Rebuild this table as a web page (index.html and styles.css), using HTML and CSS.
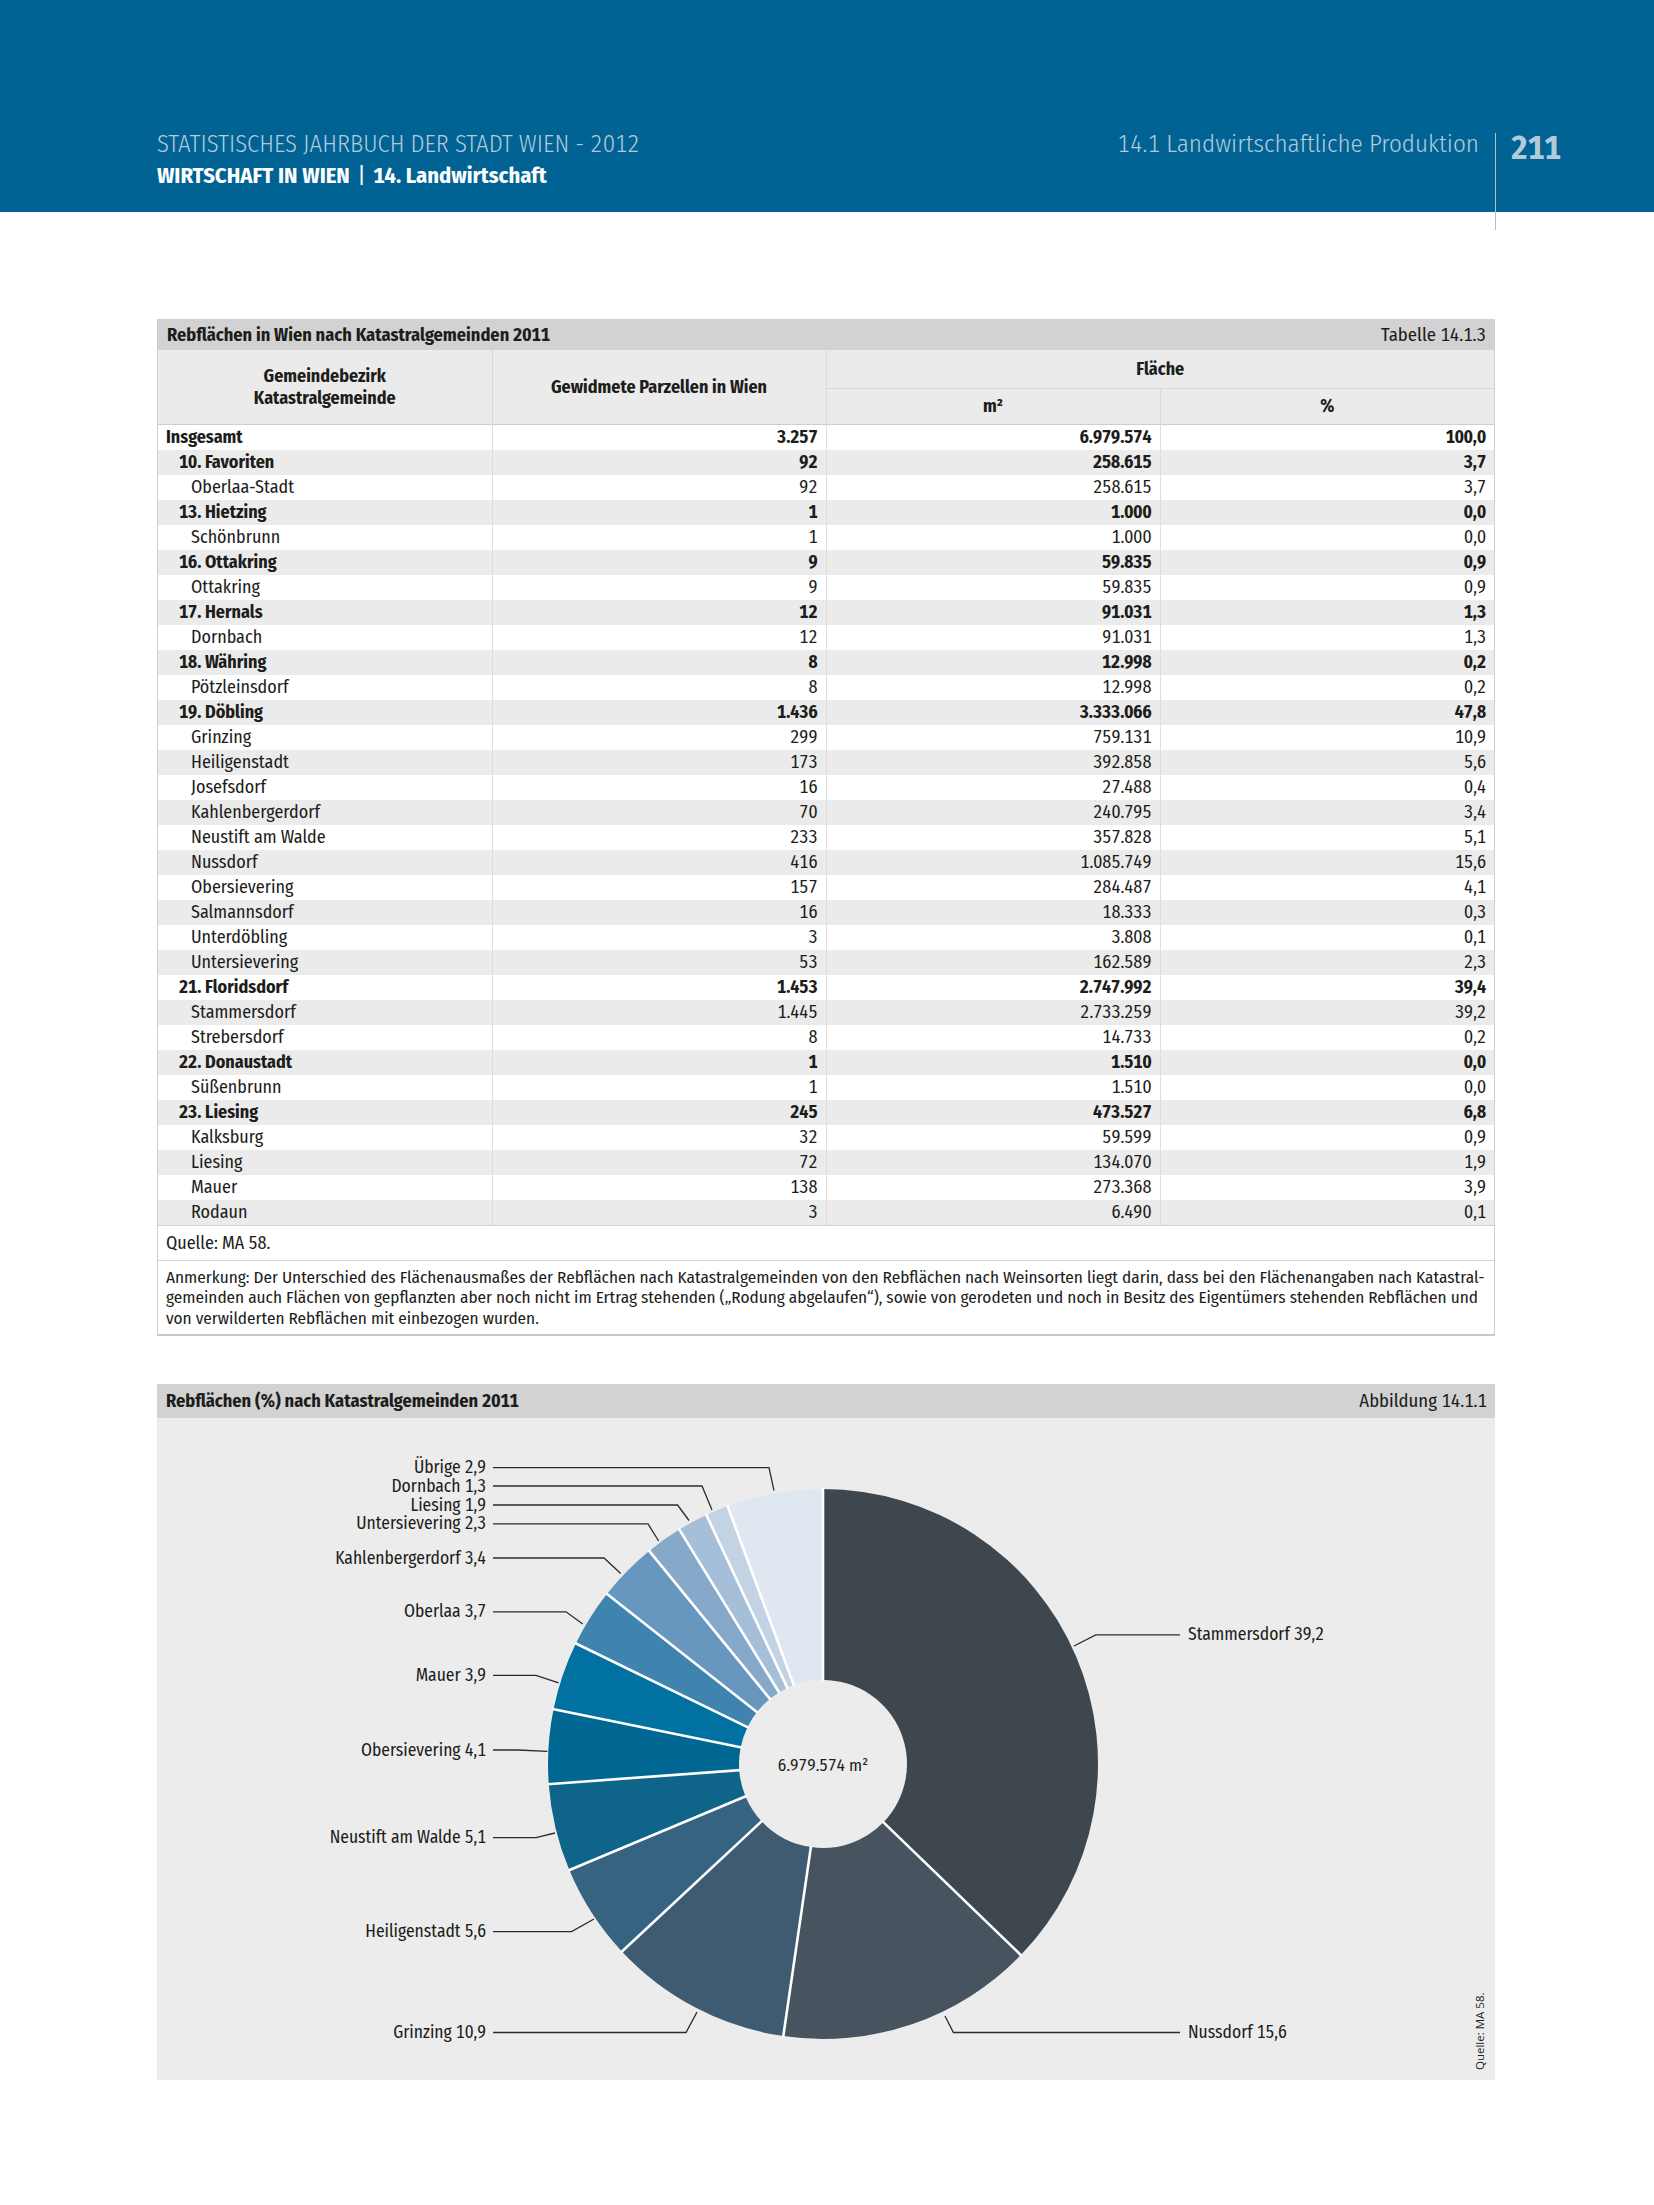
FILE: index.html
```html
<!DOCTYPE html>
<html lang="de">
<head>
<meta charset="utf-8">
<title>Statistisches Jahrbuch der Stadt Wien 2012 – 14.1 Landwirtschaftliche Produktion</title>
<link rel="stylesheet" href="styles.css">
</head>
<body>
<header class="masthead">
  <div class="mast-inner">
    <div class="mast-left">
      <div class="mast-title">STATISTISCHES JAHRBUCH DER STADT WIEN - 2012</div>
      <div class="mast-sub">WIRTSCHAFT IN WIEN <span class="bar">|</span> 14. Landwirtschaft</div>
    </div>
    <div class="mast-section">14.1 Landwirtschaftliche Produktion</div>
  </div>
  <div class="mast-page">211</div>
</header>

<main class="content">
  <section class="tbox">
    <div class="tbar">
      <span class="tbar-title">Rebflächen in Wien nach Katastralgemeinden 2011</span>
      <span class="tbar-ref">Tabelle 14.1.3</span>
    </div>
    <table class="data">
      <colgroup><col class="c1"><col class="c2"><col class="c3"><col class="c4"></colgroup>
      <thead>
        <tr class="h1">
          <th rowspan="2">Gemeindebezirk<br>Katastralgemeinde</th>
          <th rowspan="2">Gewidmete Parzellen in Wien</th>
          <th colspan="2">Fläche</th>
        </tr>
        <tr class="h2">
          <th>m²</th>
          <th>%</th>
        </tr>
      </thead>
      <tbody>
        <tr class="b"><td class="l0">Insgesamt</td><td>3.257</td><td>6.979.574</td><td>100,0</td></tr>
        <tr class="b"><td class="l1">10. Favoriten</td><td>92</td><td>258.615</td><td>3,7</td></tr>
        <tr><td class="l2">Oberlaa-Stadt</td><td>92</td><td>258.615</td><td>3,7</td></tr>
        <tr class="b"><td class="l1">13. Hietzing</td><td>1</td><td>1.000</td><td>0,0</td></tr>
        <tr><td class="l2">Schönbrunn</td><td>1</td><td>1.000</td><td>0,0</td></tr>
        <tr class="b"><td class="l1">16. Ottakring</td><td>9</td><td>59.835</td><td>0,9</td></tr>
        <tr><td class="l2">Ottakring</td><td>9</td><td>59.835</td><td>0,9</td></tr>
        <tr class="b"><td class="l1">17. Hernals</td><td>12</td><td>91.031</td><td>1,3</td></tr>
        <tr><td class="l2">Dornbach</td><td>12</td><td>91.031</td><td>1,3</td></tr>
        <tr class="b"><td class="l1">18. Währing</td><td>8</td><td>12.998</td><td>0,2</td></tr>
        <tr><td class="l2">Pötzleinsdorf</td><td>8</td><td>12.998</td><td>0,2</td></tr>
        <tr class="b"><td class="l1">19. Döbling</td><td>1.436</td><td>3.333.066</td><td>47,8</td></tr>
        <tr><td class="l2">Grinzing</td><td>299</td><td>759.131</td><td>10,9</td></tr>
        <tr><td class="l2">Heiligenstadt</td><td>173</td><td>392.858</td><td>5,6</td></tr>
        <tr><td class="l2">Josefsdorf</td><td>16</td><td>27.488</td><td>0,4</td></tr>
        <tr><td class="l2">Kahlenbergerdorf</td><td>70</td><td>240.795</td><td>3,4</td></tr>
        <tr><td class="l2">Neustift am Walde</td><td>233</td><td>357.828</td><td>5,1</td></tr>
        <tr><td class="l2">Nussdorf</td><td>416</td><td>1.085.749</td><td>15,6</td></tr>
        <tr><td class="l2">Obersievering</td><td>157</td><td>284.487</td><td>4,1</td></tr>
        <tr><td class="l2">Salmannsdorf</td><td>16</td><td>18.333</td><td>0,3</td></tr>
        <tr><td class="l2">Unterdöbling</td><td>3</td><td>3.808</td><td>0,1</td></tr>
        <tr><td class="l2">Untersievering</td><td>53</td><td>162.589</td><td>2,3</td></tr>
        <tr class="b"><td class="l1">21. Floridsdorf</td><td>1.453</td><td>2.747.992</td><td>39,4</td></tr>
        <tr><td class="l2">Stammersdorf</td><td>1.445</td><td>2.733.259</td><td>39,2</td></tr>
        <tr><td class="l2">Strebersdorf</td><td>8</td><td>14.733</td><td>0,2</td></tr>
        <tr class="b"><td class="l1">22. Donaustadt</td><td>1</td><td>1.510</td><td>0,0</td></tr>
        <tr><td class="l2">Süßenbrunn</td><td>1</td><td>1.510</td><td>0,0</td></tr>
        <tr class="b"><td class="l1">23. Liesing</td><td>245</td><td>473.527</td><td>6,8</td></tr>
        <tr><td class="l2">Kalksburg</td><td>32</td><td>59.599</td><td>0,9</td></tr>
        <tr><td class="l2">Liesing</td><td>72</td><td>134.070</td><td>1,9</td></tr>
        <tr><td class="l2">Mauer</td><td>138</td><td>273.368</td><td>3,9</td></tr>
        <tr><td class="l2">Rodaun</td><td>3</td><td>6.490</td><td>0,1</td></tr>
      </tbody>
    </table>
    <div class="quelle">Quelle: MA 58.</div>
    <p class="anm">Anmerkung: Der Unterschied des Flächenausmaßes der Rebflächen nach Katastralgemeinden von den Rebflächen nach Weinsorten liegt darin, dass bei den Flächenangaben nach Katastral-<br>gemeinden auch Flächen von gepflanzten aber noch nicht im Ertrag stehenden („Rodung abgelaufen“), sowie von gerodeten und noch in Besitz des Eigentümers stehenden Rebflächen und<br>von verwilderten Rebflächen mit einbezogen wurden.</p>
  </section>

  <section class="cbox">
    <div class="cbar">
      <span class="tbar-title">Rebflächen (%) nach Katastralgemeinden 2011</span>
      <span class="tbar-ref">Abbildung 14.1.1</span>
    </div>
    <div class="cbody">
      <svg class="chart" width="1338" height="662" viewBox="0 0 1338 662">
        <g id="slices"></g>
        <g class="leaders">
          <polyline points="336,49.6 612,49.6 617,72.6"/>
          <polyline points="336,68 545,68 555,92"/>
          <polyline points="336,87 520.6,87 532,102.5"/>
          <polyline points="336,105.8 491,105.8 501.6,123"/>
          <polyline points="336,140 447,140 463.7,155.5"/>
          <polyline points="336,193.8 409,193.8 425.8,206"/>
          <polyline points="336,257.4 379,257.4 401.6,264.8"/>
          <polyline points="336,332 361,332 390.4,333.4"/>
          <polyline points="336,419.6 379,419.6 398,415"/>
          <polyline points="336,513.6 414.6,513.6 437,501"/>
          <polyline points="336,614.5 529,614.5 540,594"/>
          <polyline points="1023,216.8 938.7,216.8 917,228"/>
          <polyline points="1023,614.5 796.4,614.5 788,598"/>
        </g>
        <g class="lbl-left">
          <text x="329" y="49.6">Übrige 2,9</text>
          <text x="329" y="68">Dornbach 1,3</text>
          <text x="329" y="87">Liesing 1,9</text>
          <text x="329" y="105.8">Untersievering 2,3</text>
          <text x="329" y="140">Kahlenbergerdorf 3,4</text>
          <text x="329" y="193.8">Oberlaa 3,7</text>
          <text x="329" y="257.4">Mauer 3,9</text>
          <text x="329" y="332">Obersievering 4,1</text>
          <text x="329" y="419.6">Neustift am Walde 5,1</text>
          <text x="329" y="513.6">Heiligenstadt 5,6</text>
          <text x="329" y="614.5">Grinzing 10,9</text>
        </g>
        <g class="lbl-right">
          <text x="1031" y="216.8">Stammersdorf 39,2</text>
          <text x="1031" y="614.5">Nussdorf 15,6</text>
        </g>
        <text class="center-lbl" x="666" y="347">6.979.574 m²</text>
        <text class="src" x="0" y="0" transform="translate(1327 652) rotate(-90)">Quelle: MA 58.</text>
      </svg>
    </div>
  </section>
</main>
<script src="script.js"></script>
</body>
</html>
```
FILE: styles.css
```css
* { box-sizing: border-box; }

body {
  margin: 0;
  background: #ffffff;
  color: #1d1d1b;
  font-family: "Fira Sans Condensed", "Roboto Condensed", "Liberation Sans", sans-serif;
  font-variant-numeric: tabular-nums;
}

/* ---------- masthead ---------- */
.masthead {
  height: 212px;
  background: #006394;
  display: grid;
  grid-template-columns: 1338px auto;
  align-items: start;
  padding: 130px 0 0 157px;
}
.mast-inner {
  display: flex;
  justify-content: space-between;
  align-items: flex-start;
  padding-right: 16px;
}
.mast-title {
  font-size: 24.5px;
  font-weight: 300;
  line-height: 28px;
  color: #b3cadb;
}
.mast-sub {
  margin-top: 4px;
  font-size: 22.5px;
  font-weight: 700;
  line-height: 28px;
  color: #ffffff;
}
.mast-sub .bar {
  font-weight: 400;
  margin: 0 3px;
}
.mast-section {
  font-size: 25px;
  font-weight: 300;
  line-height: 28px;
  color: #b3cadb;
}
.mast-page {
  height: 97px;
  margin-top: 3px;
  padding-left: 15px;
  border-left: 1px solid #a9c1d3;
  font-size: 33px;
  font-weight: 700;
  line-height: 30px;
  color: #b3cadb;
}

/* ---------- content ---------- */
.content {
  padding: 107px 0 0 157px;
}

.tbox {
  width: 1338px;
  border: 1px solid #cfcfcf;
  border-top: 0;
  border-bottom: 2px solid #c9c9c9;
}
.tbar, .cbar {
  display: flex;
  justify-content: space-between;
  align-items: center;
  padding: 0 8px 0 9px;
  background: #d1d2d1;
  font-size: 18.7px;
}
.tbar { height: 31px; }
.tbar-title { font-weight: 700; font-size: 18.3px; }

table.data {
  width: 100%;
  border-collapse: collapse;
  table-layout: fixed;
  font-size: 18px;
}
.data th {
  background: #ebebeb;
  font-weight: 700;
  text-align: center;
  line-height: 22px;
  padding: 0;
  border-left: 1px solid #d9d9d9;
}
.data th:first-child { border-left: 0; }
.data .h1 th[colspan] { border-bottom: 1px solid #d9d9d9; }
.data .h1 { height: 38px; }
.data .h2 { height: 36px; }
.data thead { border-bottom: 1px solid #cfcfcf; }
.data .h2 th:first-child { border-left: 1px solid #d9d9d9; }

.data td {
  height: 25px;
  padding: 0 8px;
  line-height: 25px;
  text-align: right;
  border-left: 1px solid #dedede;
  white-space: nowrap;
}
.data td:first-child {
  text-align: left;
  border-left: 0;
}
.data tbody tr:nth-child(even) { background: #ebebeb; }
.data tr.b td { font-weight: 700; }
.data td.l0 { padding-left: 8px; }
.data td.l1 { padding-left: 21px; }
.data td.l2 { padding-left: 33px; }

.quelle {
  height: 35px;
  display: flex;
  align-items: center;
  padding-left: 8px;
  border-top: 1px solid #cfcfcf;
  font-size: 18px;
}
.anm {
  margin: 0;
  padding: 7px 8px 5px;
  border-top: 1px solid #d6d6d6;
  font-size: 17.2px;
  line-height: 20.5px;
  white-space: nowrap;
}

/* ---------- chart ---------- */
.cbox {
  width: 1338px;
  margin-top: 48px;
}
.cbar { height: 34px; }
.cbody {
  height: 662px;
  background: #ececec;
}
.chart { display: block; }
.leaders polyline {
  fill: none;
  stroke: #2b2b2b;
  stroke-width: 1.3;
}
.chart text {
  font-size: 17.5px;
  fill: #1d1d1b;
  dominant-baseline: central;
}
.lbl-left text { text-anchor: end; }
.lbl-right text { text-anchor: start; }
.chart .center-lbl {
  font-size: 17px;
  text-anchor: middle;
}
.chart .src {
  font-family: "Open Sans", "Noto Sans", sans-serif;
  font-size: 11.5px;
  dominant-baseline: auto;
}
```
FILE: script.js
```javascript
(function () {
  var NS = "http://www.w3.org/2000/svg";
  var g = document.getElementById("slices");
  var cx = 666, cy = 346, R = 275, r = 84;
  var data = [
    [134, "#3e464e"],
    [188.3, "#47535f"],
    [227, "#3f5b71"],
    [247.3, "#36637f"],
    [265.8, "#0f6489"],
    [281.5, "#006792"],
    [296, "#0071a0"],
    [308.2, "#3f84ae"],
    [320.8, "#6797be"],
    [328.5, "#86a9ca"],
    [334.9, "#a6bfd9"],
    [339.7, "#c4d3e4"],
    [360, "#dfe7f0"]
  ];
  function pt(rad, deg) {
    var a = deg * Math.PI / 180;
    return (cx + rad * Math.sin(a)).toFixed(2) + "," + (cy - rad * Math.cos(a)).toFixed(2);
  }
  var start = 0;
  data.forEach(function (d) {
    var end = d[0];
    var large = (end - start) > 180 ? 1 : 0;
    var p = document.createElementNS(NS, "path");
    p.setAttribute("d",
      "M" + pt(R, start) +
      " A" + R + " " + R + " 0 " + large + " 1 " + pt(R, end) +
      " L" + pt(r, end) +
      " A" + r + " " + r + " 0 " + large + " 0 " + pt(r, start) + " Z");
    p.setAttribute("fill", d[1]);
    g.appendChild(p);
    start = end;
  });
  data.forEach(function (d) {
    var a = pt(r - 1, d[0]).split(","), b = pt(R + 1, d[0]).split(",");
    var l = document.createElementNS(NS, "line");
    l.setAttribute("x1", a[0]); l.setAttribute("y1", a[1]);
    l.setAttribute("x2", b[0]); l.setAttribute("y2", b[1]);
    l.setAttribute("stroke", "#ffffff");
    l.setAttribute("stroke-width", "2.6");
    g.appendChild(l);
  });
})();
```
